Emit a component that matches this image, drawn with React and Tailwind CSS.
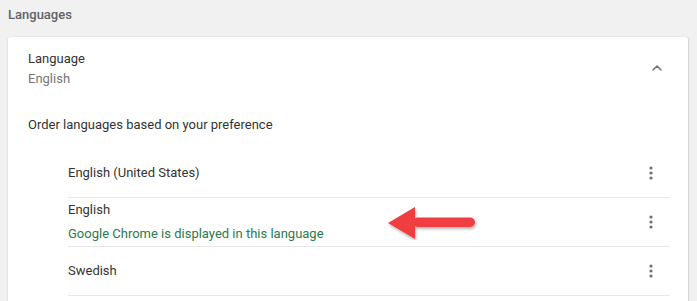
import { ChevronUp } from 'lucide-react';

const languages = [
  { name: 'English (United States)' },
  { name: 'English', note: 'Google Chrome is displayed in this language' },
  { name: 'Swedish' },
];

function Dots() {
  return (
    <svg width="4" height="14" viewBox="0 0 4 14" className="text-[#6f6f6f]" fill="currentColor">
      <circle cx="2" cy="2" r="1.6" />
      <circle cx="2" cy="7" r="1.6" />
      <circle cx="2" cy="12" r="1.6" />
    </svg>
  );
}

export default function App() {
  return (
    <div className="relative h-[301px] w-[697px] overflow-hidden bg-[#f1f1f1] font-['Roboto',sans-serif] text-[13px]">
      <h2 className="px-2 pt-[5px] text-[13px] font-medium leading-5 text-[#5f6368]">Languages</h2>

      <div className="ml-2 mt-3 w-[680px] rounded-t-[2px] bg-white pb-10 pl-5 pr-[18px] shadow-[0_1px_2px_rgba(0,0,0,0.2),1px_0_2px_rgba(0,0,0,0.08)]">
        <div className="flex items-start justify-between pt-[12px]">
          <div className="leading-5">
            <div className="text-[#333]">Language</div>
            <div className="text-[#757575]">English</div>
          </div>
          <ChevronUp className="mr-[5px] mt-[11px] h-[16px] w-[16px] text-[#6f6f6f]" strokeWidth={2.2} />
        </div>

        <p className="mt-[26px] leading-5 text-[#333]">Order languages based on your preference</p>

        <ul className="ml-10 mt-[14px]">
          {languages.map((lang) => (
            <li key={lang.name} className="flex h-[49px] items-center justify-between border-b border-[#e8e8e8]">
              <div className="leading-6">
                <div className={lang.note ? 'text-[#333] -mt-[1px]' : 'text-[#333]'}>{lang.name}</div>
                {lang.note && <div className="text-[#2a7a4e]">{lang.note}</div>}
              </div>
              <div className="mr-[17px] flex h-5 items-center">
                <Dots />
              </div>
            </li>
          ))}
        </ul>
      </div>

      <svg className="absolute left-[384px] top-[204px]" width="96" height="36" viewBox="0 0 96 36">
        <defs>
          <filter id="sh" x="-10%" y="-20%" width="130%" height="150%">
            <feDropShadow dx="1" dy="2" stdDeviation="1.5" floodColor="#000" floodOpacity="0.3" />
          </filter>
        </defs>
        <g filter="url(#sh)" fill="#f03c40">
          <polygon points="4,19 31,3 31,35" />
          <rect x="29" y="13.5" width="62" height="9.5" rx="4.75" />
        </g>
      </svg>
    </div>
  );
}
